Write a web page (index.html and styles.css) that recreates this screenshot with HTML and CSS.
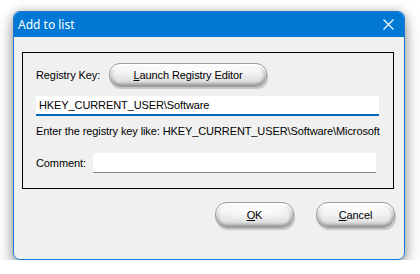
FILE: index.html
```html
<!DOCTYPE html>
<html lang="en">
<head>
  <meta charset="UTF-8" />
  <title>Add to list</title>
  <link rel="stylesheet" href="styles.css">
</head>
<body>
  <div class="dialog">
    <div class="titlebar">
      <span class="title">Add to list</span>
      <svg class="close" width="11" height="11" viewBox="0 0 11 11">
        <path d="M0.5 0.5 L10.5 10.5 M10.5 0.5 L0.5 10.5" stroke="#fff" stroke-width="1.1" fill="none" />
      </svg>
    </div>

    <div class="content">
      <div class="group">
        <div class="row">
          <span class="label key-label">Registry Key:</span>
          <button class="gel-btn launch-btn"><u>L</u>aunch Registry Editor</button>
        </div>
        <input type="text" class="key-input" value="HKEY_CURRENT_USER\Software" />
        <div class="hint">Enter the registry key like: HKEY_CURRENT_USER\Software\Microsoft</div>
        <div class="row comment-row">
          <span class="label comment-label">Comment:</span>
          <input type="text" class="comment-input" value="" />
        </div>
      </div>

      <div class="actions">
        <button class="gel-btn action-btn"><u>O</u>K</button>
        <button class="gel-btn action-btn"><u>C</u>ancel</button>
      </div>
    </div>
  </div>
</body>
</html>
```

FILE: styles.css
```css
* { box-sizing: border-box; }

body {
  margin: 0;
  padding: 11px 15px 0 13px;
  background: #ffffff;
  font-family: 'Liberation Sans', Arial, sans-serif;
  font-size: 11px;
  letter-spacing: -0.1px;
  color: #000;
}

.dialog {
  width: 392px;
  height: 249px;
  border: 1px solid #1a7ad4;
  border-radius: 7px;
  background: #f0f0f0;
  box-shadow: 0 7px 16px rgba(0, 0, 0, 0.38), 0 0 10px rgba(0, 0, 0, 0.18);
  overflow: hidden;
  display: flex;
  flex-direction: column;
}

.titlebar {
  height: 25px;
  background: #0078d4;
  color: #fff;
  display: flex;
  align-items: center;
  justify-content: space-between;
  padding: 0 10px 0 4px;
  flex-shrink: 0;
}

.title {
  font-family: 'Noto Sans', 'Open Sans', sans-serif;
  font-size: 12px;
  letter-spacing: 0;
  padding-bottom: 1px;
}

.close {
  display: block;
  margin-bottom: 1px;
}

.content {
  flex: 1;
  display: flex;
  flex-direction: column;
}

.group {
  margin: 15px 10px 0 8px;
  border: 1px solid #000;
  padding: 10px 0 15px 13px;
}

.row {
  display: flex;
  align-items: center;
}

.label {
  flex-shrink: 0;
}

.key-label { width: 73px; }
.comment-label { width: 57px; }

.gel-btn {
  font-family: 'Liberation Sans', Arial, sans-serif;
  font-size: 11px;
  letter-spacing: -0.1px;
  color: #000;
  border: 1px solid #9c9c9c;
  border-radius: 11px;
  background:
    radial-gradient(ellipse 55% 40% at 50% 32%, rgba(255, 255, 255, 1), rgba(255, 255, 255, 0) 100%),
    linear-gradient(#fafafa 0%, #efefef 40%, #e3e3e3 78%, #cfcfcf 100%);
  box-shadow:
    inset 0 2px 1px #ffffff,
    inset 0 -3px 3px rgba(0, 0, 0, 0.2),
    inset 3px 0 3px rgba(0, 0, 0, 0.07),
    inset -3px 0 3px rgba(0, 0, 0, 0.13),
    1px 2px 1px rgba(0, 0, 0, 0.18);
  padding: 0;
}

.launch-btn {
  width: 158px;
  height: 24px;
}

.key-input {
  display: block;
  margin-top: 9px;
  width: 343px;
  height: 20px;
  border: none;
  border-bottom: 2px solid #0067c0;
  background: #fff;
  font-family: 'Liberation Sans', Arial, sans-serif;
  font-size: 11px;
  letter-spacing: -0.1px;
  padding: 0 3px;
  outline: none;
}

.hint {
  margin-top: 8px;
  line-height: 14px;
  white-space: nowrap;
}

.comment-row {
  margin-top: 15px;
}

.comment-input {
  width: 283px;
  height: 20px;
  border: none;
  border-bottom: 1px solid #8a8a8a;
  background: #fff;
  outline: none;
}

.actions {
  display: flex;
  justify-content: flex-end;
  gap: 22px;
  margin-top: 13px;
  padding-right: 9px;
}

.action-btn {
  width: 79px;
  height: 26px;
  border-radius: 12px;
}
```
